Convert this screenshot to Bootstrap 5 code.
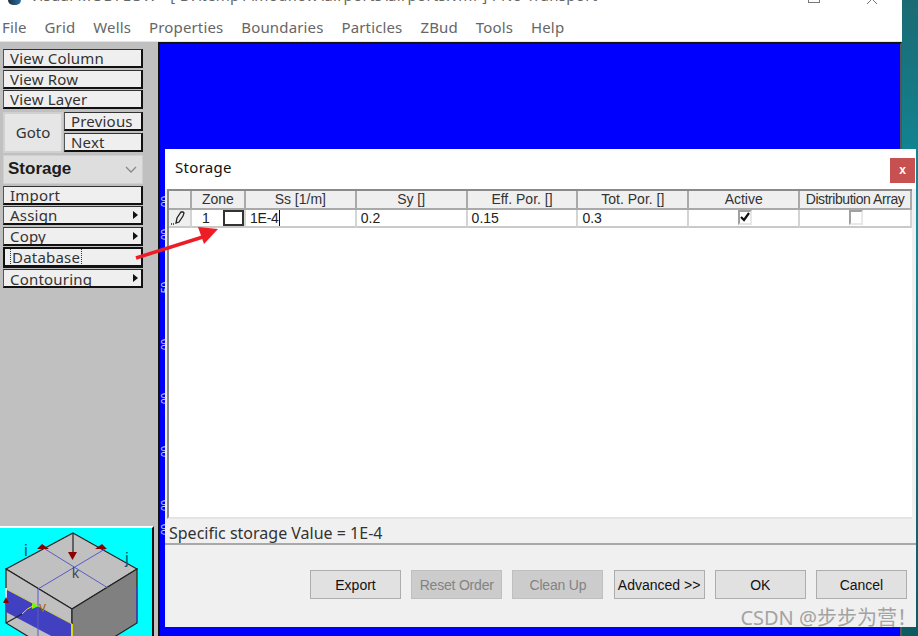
<!DOCTYPE html>
<html lang="en">
<head>
  <meta charset="UTF-8">
  <meta name="viewport" content="width=device-width, initial-scale=1.0" />
  <title>Visual MODFLOW - Storage</title>
  <link href="https://cdn.jsdelivr.net/npm/bootstrap@5.3.0/dist/css/bootstrap.min.css" rel="stylesheet">
  <style>
    body {
      width: 918px;
      height: 636px;
      overflow: hidden;
      background: #fff;
      font-family: "Liberation Sans", Arial, sans-serif;
      color: #111;
      position: relative;
    }

    .app-window { width: 902px; height: 636px; }
    .desk-strip {
      width: 16px;
      height: 636px;
      background: linear-gradient(180deg, #1b6a73 0%, #0d8f9e 35%, #17707a 60%, #0c5a62 100%);
    }

    .title-strip { height: 14px; font-size: 15px; color: #666; overflow: hidden; padding-left: 8px; font-family: "Noto Sans", sans-serif; letter-spacing: .3px; }
    .title-strip span { display: block; margin-top: -14px; line-height: 18px; white-space: nowrap; }
    .app-logo { width: 13px; height: 5px; background: linear-gradient(90deg, #1d2f3f, #2a6fa8); border-radius: 0 0 5px 5px; margin-right: 9px; flex: none; }
    .win-max { width: 12px; height: 3px; border: 1px solid #777; border-top: 0; margin-right: 46px; }
    .win-close { margin-right: 24px; display: block; }

    .menu-strip { height: 27px; font-size: 15px; color: #666; padding-left: 2px; gap: 18px; align-items: center; font-family: "Noto Sans", sans-serif; letter-spacing: .14px; }

    .work-area { height: 595px; background: #c0c0c0; border-top: 1px solid #e4e4e4; }
    .side-panel { width: 158px; }
    .side-buttons { padding: 7px 15px 0 3px; height: 484px; font-family: "Noto Sans", sans-serif; }

    .old-btn {
      display: block;
      width: 140px;
      height: 19px;
      margin-bottom: 1.5px;
      background: #efefef;
      border: 1px solid #111;
      border-top-color: #333;
      border-left-color: #555;
      border-right: 2px solid #111;
      border-bottom: 2px solid #111;
      font-size: 15px;
      line-height: 16px;
      padding: 0 0 0 6px;
      color: #333;
      position: relative;
      overflow: hidden;
      font-family: "Noto Sans", sans-serif;
      letter-spacing: .2px;
    }
    .old-btn.has-arrow::after {
      content: "";
      position: absolute;
      right: 3px;
      top: 4px;
      border-left: 5px solid #111;
      border-top: 4px solid transparent;
      border-bottom: 4px solid transparent;
    }
    .old-btn.focused { border-width: 2px 2px 3px 2px; border-color: #111; height: 21px; line-height: 14px; padding-left: 5px; margin-bottom: .5px; }
    .dot-focus { border: 1px dotted #333; padding: 0 1px; }
    .old-btn.clip-low { line-height: 18px; }
    .old-btn.before-goto { margin-bottom: 2.5px; }

    .goto-box { gap: 1px; margin-bottom: 2px; }
    .goto-btn {
      width: 60px;
      height: 41px;
      background: #e6e6e6;
      border: 2px solid #d0d0d0;
      font-size: 15px;
      color: #333;
      line-height: 37px;
      text-align: center;
    }
    .goto-side .old-btn { width: 79px; margin-bottom: 2px; }
    .goto-side .old-btn:last-child { margin-bottom: 0; }

    .zone-select {
      width: 140px;
      height: 29px;
      margin-bottom: 2px;
      background: #dedede;
      border: 1px solid #cfcfcf;
      font-size: 17px;
      font-weight: 700;
      color: #1c1c1c;
      padding: 0 5px 0 4px;
      font-family: "Liberation Sans", sans-serif;
    }

    .cube-box {
      width: 154px;
      height: 110px;
      background: #00ffff;
      border-right: 2px solid #111;
      border-top: 2px solid #fff;
    }
    .cube-box svg { display: block; }

    .canvas-blue {
      width: 744px;
      height: 595px;
      background: #0000ff;
      border: 2px solid #111;
      border-right-color: #555;
      border-bottom: 0;
      padding: 153px 0 0 3px;
      overflow: hidden;
    }
    .axis-num { display: block; writing-mode: vertical-rl; transform: rotate(180deg); font-size: 10px; line-height: 6px; height: 10px; width: 6px; color: #cfd8ff; margin-bottom: 43.500px; }
    .axis-num:nth-child(1) { margin-bottom: 23px; }
    .axis-num:nth-child(2) { margin-bottom: 43px; }
    .axis-num:nth-child(3) { margin-bottom: 47px; }
    .axis-num:nth-child(7) { margin-bottom: 14px; }

    .dialog-win {
      position: absolute;
      left: 165px;
      top: 149px;
      width: 751px;
      height: 478px;
      background: #f0f0f0;
    }
    .dialog-head { height: 40px; background: #fff; padding: 0 1px 0 10px; }
    .dialog-head h6 { font-size: 15px; font-weight: 400; margin: 4px 0 0; line-height: 28px; font-family: "Noto Sans", sans-serif; color: #111; letter-spacing: .3px; }
    .close-red { width: 25px; height: 25px; background: #c75050; color: #fff; border: 0; margin-top: 9px; font-size: 12px; line-height: 23px; padding: 0; font-weight: 700; }

    .grid-wrap {
      height: 330px;
      background: #fff;
      margin-left: 2px;
      margin-right: 4px;
      border-left: 2px solid #8a8a8a;
      border-top: 2px solid #8a8a8a;
      border-bottom: 2px solid #e4e4e4;
    }
    .grid-head, .grid-row { display: flex; font-size: 14px; }
    .grid-head > div {
      height: 19px;
      background: #efefef;
      text-align: center;
      line-height: 17px;
      color: #333;
      border-right: 2px solid #a9a9a9;
      border-bottom: 2px solid #a9a9a9;
      white-space: nowrap;
      overflow: hidden;
    }
    .grid-row > div {
      height: 18px;
      line-height: 16px;
      padding-left: 4px;
      background: #fff;
      color: #222;
      border-right: 2px solid #d4d4d4;
      border-bottom: 2px solid #c9c9c9;
      position: relative;
    }
    .grid-row > .row-marker { background: #efefef; padding: 0; }
    .col-mark { width: 23px; }
    .col-zone { width: 54px; }
    .col-wide { width: 111px; }
    .col-dist { width: 112px; }
    .grid-head > .col-dist { letter-spacing: -.45px; }
    .grid-row > .zone-cell { padding-left: 10px; }
    .color-swatch { position: absolute; right: 0; top: 0; width: 21px; height: 16px; border: 2px solid #333; background: #fff; }
    .text-caret { border-right: 1px solid #111; padding-right: 0; letter-spacing: -.2px; }
    .tick-box {
      position: absolute;
      left: 50%;
      top: 0;
      margin-left: -6px;
      width: 14px;
      height: 15px;
      border-left: 2px solid #a0a0a0;
      border-top: 2px solid #a0a0a0;
      border-right: 2px solid #e8e8e8;
      border-bottom: 2px solid #e8e8e8;
    }

    .status-line { height: 26px; border-bottom: 2px solid #a8a8a8; font-size: 16px; padding: 4px 0 0 4px; line-height: 20px; color: #333; font-family: "Noto Sans", sans-serif; }
    .bottom-bar { padding: 25px 0 0 145px; gap: 10.2px; }
    .flat-btn {
      width: 91px;
      height: 29px;
      background: #e1e1e1;
      border: 1px solid #adadad;
      font-size: 14px;
      color: #111;
      padding: 0;
      line-height: 26px;
      flex: none;
    }
    .flat-btn:disabled { background: #cccccc; border-color: #bfbfbf; color: #838383; opacity: 1; letter-spacing: -.2px; }
    .csdn-mark { position: absolute; right: -1px; bottom: -2px; font-size: 20px; color: #a3a3a3; font-family: "Noto Sans", "Noto Sans CJK SC", sans-serif; line-height: 22px; white-space: nowrap; }

    .red-arrow { position: absolute; left: 130px; top: 222px; }
  </style>
</head>

<body>
  <div class="d-flex">
    <div class="app-window d-flex flex-column">
      <div class="title-strip d-flex">
        <div class="app-logo"></div>
        <span>Visual MODFLOW - [ D:\temp1\modflow\airports\airports.vmf ] PNo Transport</span>
        <div class="win-max ms-auto"></div>
        <svg class="win-close" width="12" height="4" viewBox="0 0 12 4"><path d="M1 4 5 0M11 4 7 0" fill="none" stroke="#777"/></svg>
      </div>
      <div class="menu-strip d-flex">
        <div>File</div><div>Grid</div><div>Wells</div><div>Properties</div><div>Boundaries</div><div>Particles</div><div>ZBud</div><div>Tools</div><div>Help</div>
      </div>
      <div class="work-area d-flex">
        <div class="side-panel d-flex flex-column">
          <div class="side-buttons">
            <button class="old-btn text-start">View Column</button>
            <button class="old-btn text-start">View Row</button>
            <button class="old-btn text-start before-goto">View Layer</button>
            <div class="goto-box d-flex">
              <div class="goto-btn">Goto</div>
              <div class="goto-side">
                <button class="old-btn text-start">Previous</button>
                <button class="old-btn text-start">Next</button>
              </div>
            </div>
            <div class="zone-select d-flex align-items-center justify-content-between">
              <span>Storage</span>
              <svg width="12" height="7" viewBox="0 0 12 7"><path d="M1 1l5 5 5-5" fill="none" stroke="#888" stroke-width="1.3"/></svg>
            </div>
            <button class="old-btn text-start">Import</button>
            <button class="old-btn text-start has-arrow">Assign</button>
            <button class="old-btn text-start has-arrow">Copy</button>
            <button class="old-btn text-start focused"><span class="dot-focus">Database</span></button>
            <button class="old-btn text-start has-arrow clip-low">Contouring</button>
          </div>
          <div class="cube-box mt-auto">
            <svg width="152" height="108" viewBox="0 0 152 108">
              <path d="M73 5 L137 41 L72 81 L6 41Z" fill="#c0c0c0" stroke="#222" stroke-width="1.2"/>
              <path d="M6 41 L72 81 V135 L6 95Z" fill="#c0c0c0" stroke="#222" stroke-width="1.2"/>
              <path d="M72 81 L137 41 V95 L72 135Z" fill="#808080" stroke="#222" stroke-width="1.2"/>
              <path d="M6 61 L72 96 V119 L6 84Z" fill="#4040c0"/>
              <path d="M6 61 L72 96" stroke="#c8c850" stroke-width="1" fill="none"/>
              <path d="M72 96 V108" stroke="#ffff00" stroke-width="1.6"/>
              <path d="M6 60 V73" stroke="#fff" stroke-width="1.6"/>
              <path d="M137 59 V93" stroke="#4040e0" stroke-width="1.2"/>
              <path d="M45 21 L108 60 M105 21 L38 61 V108" stroke="#5a5ac8" stroke-width="1" fill="none"/>
              <path d="M73 5 V26" stroke="#222" stroke-width="1.2"/>
              <path d="M68 24h9l-4.500 8zM37 21l5-5 7 5zM107 21l-5-5-7 5z" fill="#8b0000"/>
              <path d="M3 75l3-6 3 6z" fill="#8b0000"/>
              <path d="M32 75l7 3-7 3z" fill="#66ff00"/>
              <path d="M6 95 L22 86" stroke="#222" stroke-width="1.2"/>
              <path d="M22 86 Q27 80 33 78" stroke="#ffe000" stroke-width="1" fill="none"/>
              <text x="24" y="28" font-size="17" fill="#0a5a7a" font-family="Liberation Sans">i</text>
              <text x="125" y="36" font-size="17" fill="#0a5a7a" font-family="Liberation Sans">j</text>
              <text x="72" y="50" font-size="14" fill="#444" font-family="Liberation Sans">k</text>
              <text x="39" y="84" font-size="14" fill="#a06020" font-family="Liberation Sans">v</text>
            </svg>
          </div>
        </div>
        <div class="canvas-blue">
          <div class="axis-col">
            <span class="axis-num">00</span>
            <span class="axis-num">00</span>
            <span class="axis-num">50</span>
            <span class="axis-num">00</span>
            <span class="axis-num">00</span>
            <span class="axis-num">00</span>
            <span class="axis-num">00</span>
            <span class="axis-num">00</span>
          </div>
        </div>
      </div>
    </div>
    <div class="desk-strip"></div>
  </div>

  <div class="dialog-win d-flex flex-column">
    <div class="dialog-head d-flex justify-content-between">
      <h6>Storage</h6>
      <button class="close-red">x</button>
    </div>
    <div class="grid-wrap">
      <div class="grid-head">
        <div class="col-mark"></div>
        <div class="col-zone">Zone</div>
        <div class="col-wide">Ss [1/m]</div>
        <div class="col-wide">Sy []</div>
        <div class="col-wide">Eff. Por. []</div>
        <div class="col-wide">Tot. Por. []</div>
        <div class="col-wide">Active</div>
        <div class="col-dist">Distribution Array</div>
      </div>
      <div class="grid-row">
        <div class="col-mark row-marker d-flex justify-content-end pe-1">
          <svg width="16" height="15" viewBox="0 0 16 15"><path d="M1 14h1M3 14h1M6 13l1-5 4-6h2l1 1-1 3-4 6z" fill="none" stroke="#222" stroke-width="1.3"/></svg>
        </div>
        <div class="col-zone zone-cell">1<span class="color-swatch"></span></div>
        <div class="col-wide"><span class="text-caret">1E-4</span></div>
        <div class="col-wide">0.2</div>
        <div class="col-wide">0.15</div>
        <div class="col-wide">0.3</div>
        <div class="col-wide"><span class="tick-box"><svg class="d-block" width="10" height="11" viewBox="0 0 10 11"><path d="M1 5l3 3 5-7" fill="none" stroke="#111" stroke-width="2.2"/></svg></span></div>
        <div class="col-dist"><span class="tick-box"></span></div>
      </div>
    </div>
    <div class="status-line">Specific storage Value = 1E-4</div>
    <div class="bottom-bar d-flex">
      <button class="flat-btn">Export</button>
      <button class="flat-btn" disabled>Reset Order</button>
      <button class="flat-btn" disabled>Clean Up</button>
      <button class="flat-btn">Advanced &gt;&gt;</button>
      <button class="flat-btn">OK</button>
      <button class="flat-btn">Cancel</button>
    </div>
    <div class="csdn-mark">CSDN @步步为营！</div>
  </div>

  <svg class="red-arrow" width="96" height="42" viewBox="0 0 96 42">
    <path d="M6 36 L76 14" stroke="#ee1c25" stroke-width="3.5" fill="none"/>
    <path d="M88 7 L68 5 L74 22Z" fill="#ee1c25"/>
  </svg>
  <script src="https://cdn.jsdelivr.net/npm/bootstrap@5.3.0/dist/js/bootstrap.bundle.min.js"></script>
</body>
</html>
